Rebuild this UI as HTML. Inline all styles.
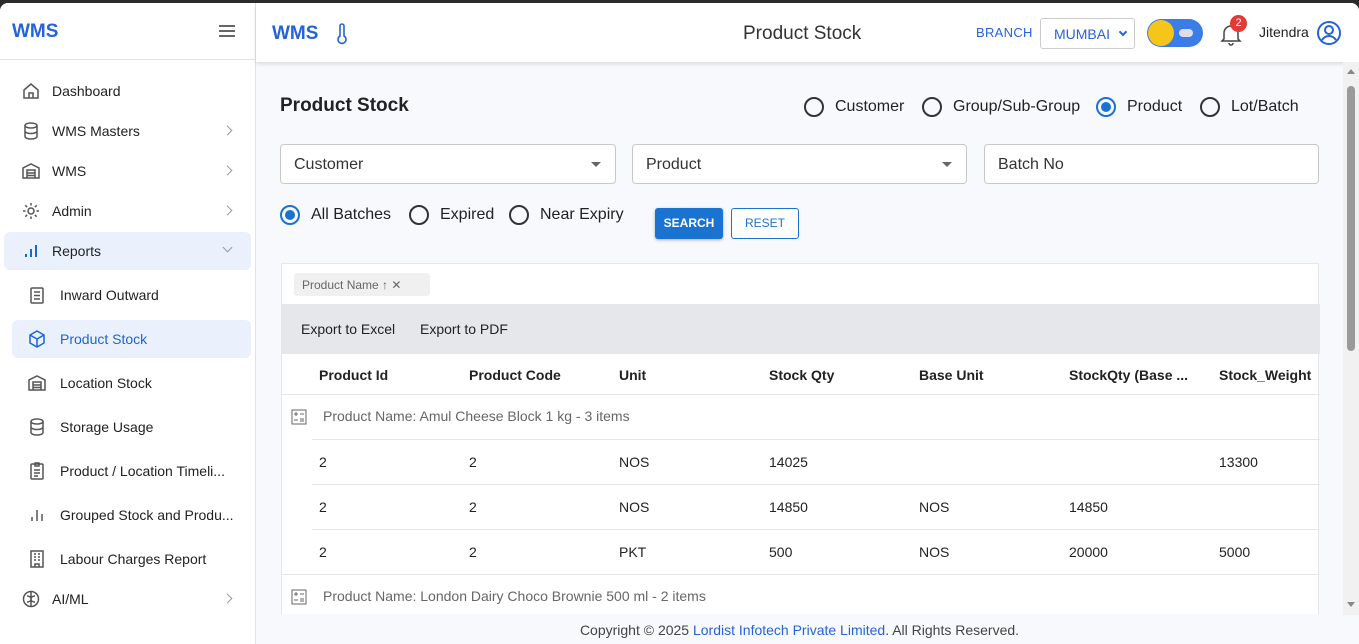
<!DOCTYPE html>
<html><head><meta charset="utf-8"><style>
*{box-sizing:border-box;margin:0;padding:0}
body{width:1359px;height:644px;overflow:hidden;background:#2b2b2b;font-family:"Liberation Sans",sans-serif;color:#222;position:relative}
.win{position:absolute;left:0;top:3px;width:1359px;height:641px;background:#f7f9fc;border-radius:8px 8px 0 0;overflow:hidden}
.side{position:absolute;left:0;top:0;width:256px;height:641px;background:#fff;border-right:1px solid #e3e3e3}
.logo{height:57px;border-bottom:1px solid #e3e3e3;position:relative}
.logo b{position:absolute;left:12px;top:18px;color:#2563d9;font-size:19px}
.ham{position:absolute;left:219px;top:22px;width:16px;height:12px;border-top:2px solid #666;border-bottom:2px solid #666}
.ham:after{content:"";position:absolute;left:0;top:3px;width:16px;border-top:2px solid #666}
.item{position:absolute;left:4px;width:247px;height:38px;font-size:14px;color:#222;border-radius:6px}
.item span{position:absolute;left:48px;top:11px}
.item svg{position:absolute;left:17px;top:9px}
.item .chev{position:absolute;right:20px;top:15px;width:7px;height:7px;border-right:1.5px solid #999;border-top:1.5px solid #999;transform:rotate(45deg)}
.sub{left:12px;width:239px}
.sub span{left:48px}
.sub svg{left:15px}
.sel{background:#eaf1fc;color:#1a66d1}
.hdr{position:absolute;left:256px;top:0;width:1103px;height:59px;background:#fff;box-shadow:0 2px 4px rgba(0,0,0,.12)}
.main{position:absolute;left:256px;top:59px;width:1087px;height:582px}
.t{position:absolute;white-space:nowrap}
.radio{position:absolute;width:20px;height:20px;border:2px solid #333;border-radius:50%}
.radio.on{border-color:#1a73d1}
.radio.on:after{content:"";position:absolute;left:3px;top:3px;width:10px;height:10px;border-radius:50%;background:#1a73d1}
.inp{position:absolute;height:40px;border:1px solid #c8c8c8;border-radius:4px;background:#fff;font-size:16px;color:#333}
.inp span{position:absolute;left:13px;top:11px}
.inp i{position:absolute;right:14px;top:17px;border-left:5px solid transparent;border-right:5px solid transparent;border-top:5px solid #666}
.grid{position:absolute;left:25px;top:201px;width:1038px;height:400px;background:#fff;border:1px solid #e6e6e6}
.th{position:absolute;font-weight:bold;font-size:14px;top:103px}
.row{position:absolute;left:30px;width:1008px;height:45px;border-top:1px solid #e6e6e6;font-size:14px}
.row span{position:absolute;top:14px}
</style></head><body>
<div class="win">
<div class="side">
 <div class="logo"><b>WMS</b><div class="ham"></div></div>
 <div class="item" style="top:69px"><svg width="20" height="20" viewBox="0 0 20 20" fill="none" stroke="#555" stroke-width="1.5"><path d="M3 9l7-6 7 6v8H3z"/><path d="M8 17v-5h4v5"/></svg><span>Dashboard</span></div>
 <div class="item" style="top:109px"><svg width="20" height="20" viewBox="0 0 20 20" fill="none" stroke="#555" stroke-width="1.5"><ellipse cx="10" cy="4.5" rx="6" ry="2.5"/><path d="M4 4.5v11c0 1.4 2.7 2.5 6 2.5s6-1.1 6-2.5v-11M4 10c0 1.4 2.7 2.5 6 2.5s6-1.1 6-2.5"/></svg><span>WMS Masters</span><div class="chev"></div></div>
 <div class="item" style="top:149px"><svg width="20" height="20" viewBox="0 0 20 20" fill="none" stroke="#555" stroke-width="1.5"><path d="M2 17V7l8-4 8 4v10z"/><path d="M6 17V9h8v8M6 12h8M6 14.5h8"/></svg><span>WMS</span><div class="chev"></div></div>
 <div class="item" style="top:189px"><svg width="20" height="20" viewBox="0 0 20 20" fill="none" stroke="#555" stroke-width="1.5"><circle cx="10" cy="10" r="3"/><path d="M10 2v2.5M10 15.5V18M2 10h2.5M15.5 10H18M4.3 4.3l1.8 1.8M13.9 13.9l1.8 1.8M4.3 15.7l1.8-1.8M13.9 6.1l1.8-1.8"/></svg><span>Admin</span><div class="chev"></div></div>
 <div class="item sel" style="top:229px;color:#222"><svg width="20" height="20" viewBox="0 0 20 20" fill="none" stroke="#1a66d1" stroke-width="2"><path d="M5 16v-3M10 16V8M15 16V4"/></svg><span>Reports</span><div class="chev" style="transform:rotate(135deg);top:12px"></div></div>
 <div class="item sub" style="top:273px"><svg width="20" height="20" viewBox="0 0 20 20" fill="none" stroke="#555" stroke-width="1.5"><rect x="4" y="3" width="12" height="15" rx="1"/><path d="M7 7h6M7 10.5h6M7 14h6"/></svg><span>Inward Outward</span></div>
 <div class="item sub sel" style="top:317px"><svg width="20" height="20" viewBox="0 0 20 20" fill="none" stroke="#1a66d1" stroke-width="1.5"><path d="M10 2l7 4v8l-7 4-7-4V6z"/><path d="M3 6l7 4 7-4M10 10v8"/></svg><span>Product Stock</span></div>
 <div class="item sub" style="top:361px"><svg width="20" height="20" viewBox="0 0 20 20" fill="none" stroke="#555" stroke-width="1.5"><path d="M2 17V7l8-4 8 4v10z"/><path d="M6 17V9h8v8M6 12h8M6 14.5h8"/></svg><span>Location Stock</span></div>
 <div class="item sub" style="top:405px"><svg width="20" height="20" viewBox="0 0 20 20" fill="none" stroke="#555" stroke-width="1.5"><ellipse cx="10" cy="4.5" rx="6" ry="2.5"/><path d="M4 4.5v11c0 1.4 2.7 2.5 6 2.5s6-1.1 6-2.5v-11M4 10c0 1.4 2.7 2.5 6 2.5s6-1.1 6-2.5"/></svg><span>Storage Usage</span></div>
 <div class="item sub" style="top:449px"><svg width="20" height="20" viewBox="0 0 20 20" fill="none" stroke="#555" stroke-width="1.5"><rect x="4" y="3" width="12" height="15" rx="1"/><path d="M8 2h4v3H8zM7 9h6M7 12h6M7 15h4"/></svg><span>Product / Location Timeli...</span></div>
 <div class="item sub" style="top:493px"><svg width="20" height="20" viewBox="0 0 20 20" fill="none" stroke="#555" stroke-width="1.5"><path d="M5 16v-4M10 16V5M15 16V9"/></svg><span>Grouped Stock and Produ...</span></div>
 <div class="item sub" style="top:537px"><svg width="20" height="20" viewBox="0 0 20 20" fill="none" stroke="#555" stroke-width="1.5"><rect x="4" y="2" width="12" height="16"/><path d="M7 5h2M11 5h2M7 8h2M11 8h2M7 11h2M11 11h2M8 18v-3h4v3"/></svg><span>Labour Charges Report</span></div>
 <div class="item" style="top:577px"><svg width="20" height="20" viewBox="0 0 20 20" fill="none" stroke="#555" stroke-width="1.5"><circle cx="10" cy="10" r="7.5"/><path d="M10 3v14M6 7c2 0 4 1 4 3M14 7c-2 0-4 1-4 3M6 13c2 0 4-1 4-3M14 13c-2 0-4-1-4-3"/></svg><span>AI/ML</span><div class="chev"></div></div>
</div>
<div class="hdr">
 <b class="t" style="left:16px;top:20px;color:#2563d9;font-size:19px">WMS</b>
 <svg class="t" style="left:80px;top:20px" width="12" height="22" viewBox="0 0 12 22" fill="none" stroke="#2563d9" stroke-width="1.6"><path d="M4 3a2 2 0 014 0v10a4 4 0 11-4 0z"/></svg>
 <div class="t" style="left:487px;top:20px;font-size:19px;color:#333">Product Stock</div>
 <b class="t" style="left:720px;top:22px;font-size:13px;color:#2563d9;font-weight:normal;letter-spacing:.3px">BRANCH</b>
 <div class="t" style="left:784px;top:15px;width:95px;height:31px;border:1px solid #ccc;border-radius:3px;font-size:14px;color:#2563d9"><span style="position:absolute;left:13px;top:7px">MUMBAI</span><span style="position:absolute;left:79px;top:10px;width:6px;height:6px;border-right:2px solid #2563d9;border-bottom:2px solid #2563d9;transform:rotate(45deg)"></span></div>
 <div class="t" style="left:891px;top:16px;width:56px;height:28px;border-radius:14px;background:#3b7de8"><div style="position:absolute;left:1px;top:1px;width:26px;height:26px;border-radius:50%;background:#f5c518"></div><div style="position:absolute;left:32px;top:10px;width:14px;height:8px;border-radius:4px;background:#dde"></div></div>
 <svg class="t" style="left:964px;top:19px" width="22" height="24" viewBox="0 0 22 24" fill="none" stroke="#444" stroke-width="1.5"><path d="M4 17V11a7 7 0 0114 0v6l2 2H2z"/><path d="M9 21a2 2 0 004 0"/></svg>
 <div class="t" style="left:974px;top:12px;width:17px;height:17px;border-radius:50%;background:#e53935;color:#fff;font-size:11px;text-align:center;line-height:17px">2</div>
 <div class="t" style="left:1003px;top:21px;font-size:14px;color:#222">Jitendra</div>
 <svg class="t" style="left:1060px;top:17px" width="26" height="26" viewBox="0 0 26 26" fill="none" stroke="#2563d9" stroke-width="2"><circle cx="13" cy="13" r="11"/><circle cx="13" cy="10" r="4"/><path d="M6 20c2-3 4-4 7-4s5 1 7 4"/></svg>
</div>
<div class="main">
 <div class="t" style="left:24px;top:33px;font-size:19px;font-weight:bold;color:#222">Product Stock</div>
 <div class="radio" style="left:548px;top:35px"></div><div class="t" style="left:579px;top:36px;font-size:16px">Customer</div>
 <div class="radio" style="left:666px;top:35px"></div><div class="t" style="left:697px;top:36px;font-size:16px">Group/Sub-Group</div>
 <div class="radio on" style="left:840px;top:35px"></div><div class="t" style="left:871px;top:36px;font-size:16px">Product</div>
 <div class="radio" style="left:944px;top:35px"></div><div class="t" style="left:975px;top:36px;font-size:16px">Lot/Batch</div>
 <div class="inp" style="left:24px;top:82px;width:336px"><span>Customer</span><i></i></div>
 <div class="inp" style="left:376px;top:82px;width:335px"><span>Product</span><i></i></div>
 <div class="inp" style="left:728px;top:82px;width:335px"><span>Batch No</span></div>
 <div class="radio on" style="left:24px;top:143px"></div><div class="t" style="left:55px;top:144px;font-size:16px">All Batches</div>
 <div class="radio" style="left:153px;top:143px"></div><div class="t" style="left:184px;top:144px;font-size:16px">Expired</div>
 <div class="radio" style="left:253px;top:143px"></div><div class="t" style="left:284px;top:144px;font-size:16px">Near Expiry</div>
 <div class="t" style="left:399px;top:146px;width:68px;height:31px;background:#1a73d1;border-radius:3px;color:#fff;font-size:12px;font-weight:bold;text-align:center;line-height:31px;box-shadow:0 1px 3px rgba(0,0,0,.3)">SEARCH</div>
 <div class="t" style="left:475px;top:146px;width:68px;height:31px;border:1px solid #1a73d1;border-radius:3px;color:#1a73d1;font-size:12px;text-align:center;line-height:29px;background:#fff">RESET</div>
 <div class="grid">
  <div class="t" style="left:12px;top:9px;width:136px;height:23px;background:#f0f0f0;border-radius:3px;font-size:12px;color:#666"><span style="position:absolute;left:8px;top:5px">Product Name ↑ ✕</span></div>
  <div class="t" style="left:0;top:40px;width:1038px;height:50px;background:#e6e7ea;font-size:14px"><span style="position:absolute;left:19px;top:17px">Export to Excel</span><span style="position:absolute;left:138px;top:17px">Export to PDF</span></div>
  <div class="th" style="left:37px">Product Id</div><div class="th" style="left:187px">Product Code</div><div class="th" style="left:337px">Unit</div><div class="th" style="left:487px">Stock Qty</div><div class="th" style="left:637px">Base Unit</div><div class="th" style="left:787px">StockQty (Base ...</div><div class="th" style="left:937px">Stock_Weight</div>
  <div class="t" style="left:0;top:130px;width:1038px;border-top:1px solid #e6e6e6"></div>
  <svg class="t" style="left:9px;top:145px" width="16" height="16" viewBox="0 0 16 16" fill="none" stroke="#666" stroke-width="1"><rect x="1" y="1" width="14" height="14"/><path d="M3 5h4M5 3v4M9 5h4M9 10h4M9 12h4M3 11h4"/></svg>
  <div class="t" style="left:41px;top:144px;font-size:14px;color:#666">Product Name: Amul Cheese Block 1 kg - 3 items</div>
  <div class="row" style="top:175px"><span style="left:7px">2</span><span style="left:157px">2</span><span style="left:307px">NOS</span><span style="left:457px">14025</span><span style="left:907px">13300</span></div>
  <div class="row" style="top:220px"><span style="left:7px">2</span><span style="left:157px">2</span><span style="left:307px">NOS</span><span style="left:457px">14850</span><span style="left:607px">NOS</span><span style="left:757px">14850</span></div>
  <div class="row" style="top:265px"><span style="left:7px">2</span><span style="left:157px">2</span><span style="left:307px">PKT</span><span style="left:457px">500</span><span style="left:607px">NOS</span><span style="left:757px">20000</span><span style="left:907px">5000</span></div>
  <div class="t" style="left:0;top:310px;width:1038px;border-top:1px solid #e6e6e6"></div>
  <svg class="t" style="left:9px;top:325px" width="16" height="16" viewBox="0 0 16 16" fill="none" stroke="#666" stroke-width="1"><rect x="1" y="1" width="14" height="14"/><path d="M3 5h4M5 3v4M9 5h4M9 10h4M9 12h4M3 11h4"/></svg>
  <div class="t" style="left:41px;top:324px;font-size:14px;color:#666">Product Name: London Dairy Choco Brownie 500 ml - 2 items</div>
 </div>
</div>
<div class="t" style="left:256px;top:611px;width:1087px;height:30px;background:#f7f9fc;text-align:center;font-size:14px;color:#444;padding-top:8px">Copyright © 2025 <span style="color:#2563d9">Lordist Infotech Private Limited</span>. All Rights Reserved.</div>
<div class="t" style="left:1343px;top:59px;width:16px;height:553px;background:#f1f1f1"><div style="position:absolute;left:4px;top:7px;border-left:4px solid transparent;border-right:4px solid transparent;border-bottom:5px solid #888"></div><div style="position:absolute;left:4px;top:24px;width:8px;height:265px;border-radius:4px;background:#9a9a9a"></div><div style="position:absolute;left:4px;top:540px;border-left:4px solid transparent;border-right:4px solid transparent;border-top:5px solid #888"></div></div>
</div>
</body></html>
